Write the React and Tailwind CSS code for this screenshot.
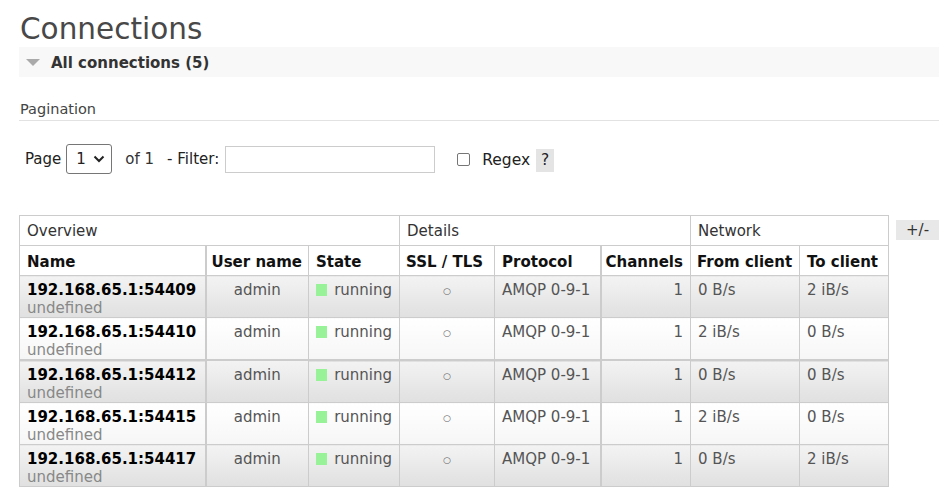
import React from 'react';

const rows = [
  { port: '54409', from: '0 B/s', to: '2 iB/s' },
  { port: '54410', from: '2 iB/s', to: '0 B/s' },
  { port: '54412', from: '0 B/s', to: '0 B/s' },
  { port: '54415', from: '2 iB/s', to: '0 B/s' },
  { port: '54417', from: '0 B/s', to: '2 iB/s' },
];

export default function App() {
  return (
    <div className="min-h-screen bg-white pl-[19px] text-[15px] text-[#444]" style={{ fontFamily: '"DejaVu Sans", Verdana, sans-serif' }}>
      <h1 className="pt-[11px] pl-px text-[29.5px] leading-[36px] text-[#484848]">Connections</h1>

      {/* collapsible section header */}
      <div className="flex h-[30px] items-center bg-[#f8f8f8]">
        <svg width="14" height="7" viewBox="0 0 14 7" className="ml-[7px] mr-[11px] mt-px">
          <polygon points="0,0 14,0 7,7" fill="#aaa" />
        </svg>
        <span className="mt-[2px] font-bold text-[#333]">All connections (5)</span>
      </div>

      <div className="mt-[23px] border-b border-[#e2e2e2] pl-px pb-[2px] text-[14.5px] leading-[18px] text-[#444]">Pagination</div>

      {/* pagination controls */}
      <div className="mt-[23px] flex items-center pl-[6px] text-[15px] text-[#222]">
        <span>Page</span>
        <div className="ml-[5px] flex h-[30px] w-[46px] items-center justify-between rounded-[3px] border border-[#767676] bg-white pl-[9px] pr-[6px]">
          <span>1</span>
          <svg width="12" height="8" viewBox="0 0 12 8">
            <path d="M1.5 1.5 L6 6 L10.5 1.5" fill="none" stroke="#222" strokeWidth="2" />
          </svg>
        </div>
        <span className="ml-[13px] text-[#333]">of 1</span>
        <span className="ml-[13px]">- Filter:</span>
        <div className="ml-[6px] h-[27px] w-[210px] border border-[#ccc] bg-white" />
        <div className="ml-[22px] h-[13px] w-[13px] rounded-[2px] border border-[#767676] bg-white" />
        <span className="ml-[12px] mt-[4px] text-[15.5px]">Regex</span>
        <span className="ml-[6px] mt-[3px] flex h-[23px] w-[18px] items-center justify-center bg-[#e4e4e4] text-[15.5px]">?</span>
      </div>

      {/* connections table */}
      <div className="mt-[41px] flex items-start">
        <table className="table-fixed border-collapse" style={{ width: 869 }}>
          <colgroup>
            <col className="w-[186px]" />
            <col className="w-[103px]" />
            <col className="w-[91px]" />
            <col className="w-[95px]" />
            <col className="w-[106px]" />
            <col className="w-[90px]" />
            <col className="w-[109px]" />
            <col className="w-[89px]" />
          </colgroup>
          <thead className="whitespace-nowrap">
            <tr className="h-[30px]">
              <th colSpan={3} className="border border-[#ccc] px-[7px] pt-[2px] text-left font-normal text-[#333]">Overview</th>
              <th colSpan={3} className="border border-[#ccc] px-[7px] pt-[2px] text-left font-normal text-[#333]">Details</th>
              <th colSpan={2} className="border border-[#ccc] px-[7px] pt-[2px] text-left font-normal text-[#333]">Network</th>
            </tr>
            <tr className="h-[30px] text-[#111]">
              <th className="border border-r-2 border-[#ccc] px-[7px] pt-[3px] text-left font-bold">Name</th>
              <th className="border border-[#ccc] px-[5px] pt-[3px] text-left font-bold">User name</th>
              <th className="border border-[#ccc] px-[7px] pt-[3px] text-left font-bold">State</th>
              <th className="border border-[#ccc] px-[6px] pt-[3px] text-left font-bold">SSL / TLS</th>
              <th className="border border-r-2 border-[#ccc] px-[7px] pt-[3px] text-left font-bold">Protocol</th>
              <th className="border border-[#ccc] px-[4px] pt-[3px] text-left font-bold">Channels</th>
              <th className="border border-[#ccc] px-[6px] pt-[3px] text-left font-bold">From client</th>
              <th className="border border-[#ccc] px-[7px] pt-[3px] text-left font-bold">To client</th>
            </tr>
          </thead>
          <tbody>
            {rows.map((r, i) => {
              const bg = i % 2 === 0
                ? 'bg-gradient-to-b from-[#f3f3f3] to-[#e0e0e0]'
                : 'bg-gradient-to-b from-[#ffffff] to-[#f6f6f6]';
              const top = i === 2 ? 'border-t-2' : '';
              const cell = `border border-[#ccc] ${top} ${bg} h-[41px] align-top pt-[5px] pb-0 leading-[18px] whitespace-nowrap`;
              return (
                <tr key={r.port}>
                  <td className={`${cell} border-r-2 px-[7px]`}>
                    <div className="font-bold text-black">192.168.65.1:{r.port}</div>
                    <div className="text-[#888]">undefined</div>
                  </td>
                  <td className={`${cell} px-[7px] text-center text-[#555]`}>admin</td>
                  <td className={`${cell} px-[7px] text-[#555]`}>
                    <div className="flex items-center">
                      <span className="mr-[7px] inline-block h-[12px] w-[12px] bg-[#98f398]" />
                      running
                    </div>
                  </td>
                  <td className={`${cell} text-center text-[9px] text-[#666]`}>
                    <span className="leading-[20px]">○</span>
                  </td>
                  <td className={`${cell} border-r-2 px-[7px] text-[#555]`}>AMQP 0-9-1</td>
                  <td className={`${cell} px-[7px] text-right text-[#555]`}>1</td>
                  <td className={`${cell} px-[7px] text-[#555]`}>{r.from}</td>
                  <td className={`${cell} px-[7px] text-[#555]`}>{r.to}</td>
                </tr>
              );
            })}
          </tbody>
        </table>
        <span className="ml-[7px] mt-[5px] flex h-[20px] w-[44px] items-center justify-center bg-[#e8e8e8] text-[#333]">+/-</span>
      </div>
    </div>
  );
}
